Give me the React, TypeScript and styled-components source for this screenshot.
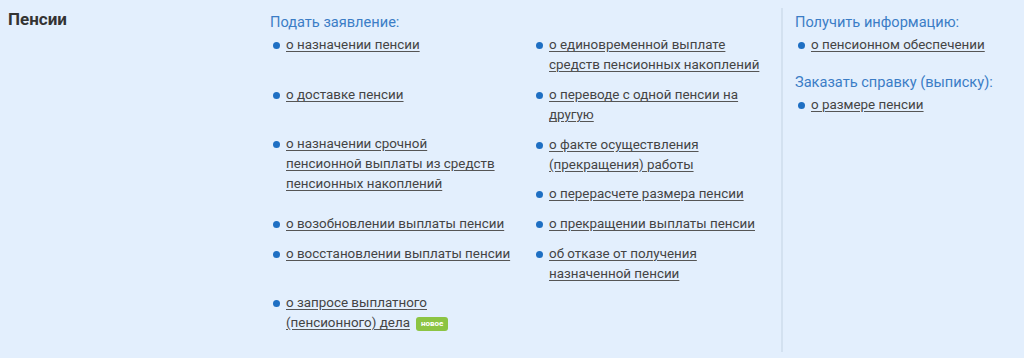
import React from "react";
import styled, { createGlobalStyle } from "styled-components";

const Global = createGlobalStyle`
  html, body { margin: 0; padding: 0; background: #e3effd; }
  body { font-family: Roboto, "Noto Sans", Arial, sans-serif; }
`;

const Page = styled.div`
  width: 1024px;
  height: 358px;
  box-sizing: border-box;
  background: #e3effd;
  display: grid;
  grid-template-columns: 262px 511px 243px;
  padding: 8px 0 6px 8px;
`;

const Title = styled.h2`
  margin: 0;
  font-size: 17px;
  line-height: 22px;
  font-weight: 700;
  color: #333;
`;

const Main = styled.div`
  display: flex;
  flex-direction: column;
`;

const Heading = styled.div<{ $top?: number }>`
  font-size: 14.6px;
  line-height: 20px;
  color: #3b7dc6;
  margin-top: ${(p) => p.$top ?? 4}px;
  margin-bottom: 3px;
`;

const Columns = styled.div`
  display: grid;
  grid-template-columns: 263px 1fr;
`;

const List = styled.ul`
  list-style: none;
  margin: 0;
  padding: 0;
`;

const Item = styled.li<{ $gap?: number }>`
  position: relative;
  padding-left: 16px;
  margin-bottom: ${(p) => p.$gap ?? 10}px;
  font-size: 13.4px;
  line-height: 20px;
  color: #444;
  &::before {
    content: "";
    position: absolute;
    left: 2.5px;
    top: 7px;
    width: 7px;
    height: 7px;
    border-radius: 50%;
    background: #1e6fc3;
  }
`;

const Link = styled.a`
  color: #444;
  text-decoration: underline;
  text-decoration-color: #555;
  text-underline-offset: 2px;
  cursor: pointer;
`;

const Badge = styled.span`
  display: inline-block;
  margin-left: 6px;
  padding: 0 5px;
  height: 14px;
  line-height: 14px;
  border-radius: 3px;
  background: #8cc443;
  color: #fff;
  font-size: 8px;
  font-weight: 700;
  vertical-align: 1px;
`;

const Side = styled.div`
  border-left: 2px solid #d3e1f0;
  padding-left: 12px;
  display: flex;
  flex-direction: column;
`;

export default function App() {
  return (
    <>
      <Global />
      <Page>
        <Title>Пенсии</Title>
        <Main>
          <Heading>Подать заявление:</Heading>
          <Columns>
            <List>
              <Item $gap={30}><Link>о назначении пенсии</Link></Item>
              <Item $gap={29}><Link>о доставке пенсии</Link></Item>
              <Item $gap={20}><Link>о назначении срочной<br />пенсионной выплаты из средств<br />пенсионных накоплений</Link></Item>
              <Item $gap={10}><Link>о возобновлении выплаты пенсии</Link></Item>
              <Item $gap={29}><Link>о восстановлении выплаты пенсии</Link></Item>
              <Item $gap={0}><Link>о запросе выплатного<br />(пенсионного) дела</Link><Badge>новое</Badge></Item>
            </List>
            <List>
              <Item $gap={10}><Link>о единовременной выплате<br />средств пенсионных накоплений</Link></Item>
              <Item $gap={10}><Link>о переводе с одной пенсии на<br />другую</Link></Item>
              <Item $gap={9}><Link>о факте осуществления<br />(прекращения) работы</Link></Item>
              <Item $gap={10}><Link>о перерасчете размера пенсии</Link></Item>
              <Item $gap={10}><Link>о прекращении выплаты пенсии</Link></Item>
              <Item $gap={0}><Link>об отказе от получения<br />назначенной пенсии</Link></Item>
            </List>
          </Columns>
        </Main>
        <Side>
          <Heading $top={4}>Получить информацию:</Heading>
          <List>
            <Item $gap={0}><Link>о пенсионном обеспечении</Link></Item>
          </List>
          <Heading $top={17}>Заказать справку (выписку):</Heading>
          <List>
            <Item $gap={0}><Link>о размере пенсии</Link></Item>
          </List>
        </Side>
      </Page>
    </>
  );
}
